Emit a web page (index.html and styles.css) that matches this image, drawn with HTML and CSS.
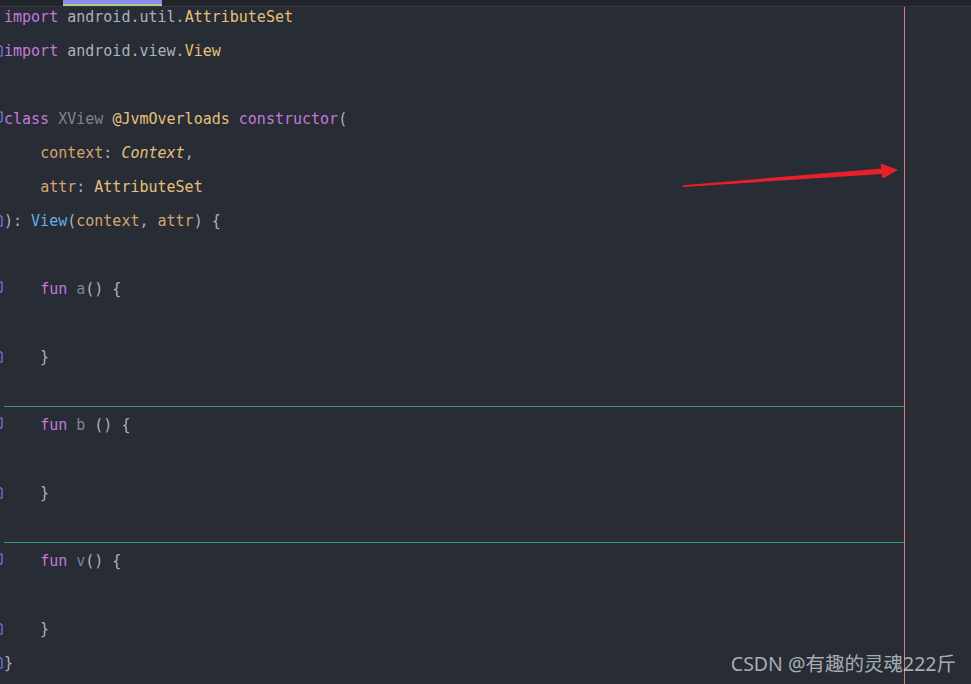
FILE: index.html
```html
<!DOCTYPE html>
<html lang="en">
<head>
    <meta charset="UTF-8">
    <title>XView.kt</title>
    <link rel="stylesheet" href="styles.css">
</head>
<body>

    <div class="tabbar">
        <div class="tab"></div>
    </div>

    <div class="editor">
        <div class="code">
            <div class="line"><span class="gutter"></span><span class="kw">import</span> android.util.<span class="ty">AttributeSet</span></div>
            <div class="line"><span class="gutter"><svg width="12" height="14" viewBox="0 0 12 14"><path d="M1 13 V4 L5 1 L9 4 V13 Z" fill="none" stroke="#7b7ef2" stroke-width="1.2"/></svg></span><span class="kw">import</span> android.view.<span class="ty">View</span></div>
            <div class="line"><span class="gutter"></span></div>
            <div class="line"><span class="gutter"><svg width="12" height="14" viewBox="0 0 12 14"><path d="M1 1 V10 L5 13 L9 10 V1 Z" fill="none" stroke="#7b7ef2" stroke-width="1.2"/></svg></span><span class="kw">class</span> <span class="unused">XView</span> <span class="ty">@JvmOverloads</span> <span class="kw">constructor</span>(</div>
            <div class="line"><span class="gutter"></span>    <span class="param">context</span>: <span class="ty italic">Context</span>,</div>
            <div class="line"><span class="gutter"></span>    <span class="param">attr</span>: <span class="ty">AttributeSet</span></div>
            <div class="line"><span class="gutter"><svg width="12" height="14" viewBox="0 0 12 14"><path d="M1 13 V4 L5 1 L9 4 V13 Z" fill="none" stroke="#7b7ef2" stroke-width="1.2"/></svg></span>): <span class="fn">View</span>(<span class="param">context</span>, <span class="param">attr</span>) {</div>
            <div class="line"><span class="gutter"></span></div>
            <div class="line"><span class="gutter"><svg width="12" height="14" viewBox="0 0 12 14"><path d="M1 1 V10 L5 13 L9 10 V1 Z" fill="none" stroke="#7b7ef2" stroke-width="1.2"/></svg></span>    <span class="kw">fun</span> <span class="unused">a</span>() {</div>
            <div class="line"><span class="gutter"></span></div>
            <div class="line"><span class="gutter"><svg width="12" height="14" viewBox="0 0 12 14"><path d="M1 13 V4 L5 1 L9 4 V13 Z" fill="none" stroke="#7b7ef2" stroke-width="1.2"/></svg></span>    }</div>
            <div class="line"><span class="gutter"></span></div>
            <div class="line sep"><span class="gutter"><svg width="12" height="14" viewBox="0 0 12 14"><path d="M1 1 V10 L5 13 L9 10 V1 Z" fill="none" stroke="#7b7ef2" stroke-width="1.2"/></svg></span>    <span class="kw">fun</span> <span class="unused">b</span> () {</div>
            <div class="line"><span class="gutter"></span></div>
            <div class="line"><span class="gutter"><svg width="12" height="14" viewBox="0 0 12 14"><path d="M1 13 V4 L5 1 L9 4 V13 Z" fill="none" stroke="#7b7ef2" stroke-width="1.2"/></svg></span>    }</div>
            <div class="line"><span class="gutter"></span></div>
            <div class="line sep"><span class="gutter"><svg width="12" height="14" viewBox="0 0 12 14"><path d="M1 1 V10 L5 13 L9 10 V1 Z" fill="none" stroke="#7b7ef2" stroke-width="1.2"/></svg></span>    <span class="kw">fun</span> <span class="unused">v</span>() {</div>
            <div class="line"><span class="gutter"></span></div>
            <div class="line"><span class="gutter"><svg width="12" height="14" viewBox="0 0 12 14"><path d="M1 13 V4 L5 1 L9 4 V13 Z" fill="none" stroke="#7b7ef2" stroke-width="1.2"/></svg></span>    }</div>
            <div class="line"><span class="gutter"><svg width="12" height="14" viewBox="0 0 12 14"><path d="M1 13 V4 L5 1 L9 4 V13 Z" fill="none" stroke="#7b7ef2" stroke-width="1.2"/></svg></span>}</div>
        </div>
        <div class="rest"></div>
    </div>

    <!-- red annotation arrow pointing at the right margin guide -->
    <svg class="arrow" width="230" height="30" viewBox="0 0 230 30">
        <path d="M0 24.2 L199 7.6 L199.6 13 L0.3 26 Z" fill="#e8202a"/>
        <path d="M198 3 L214 9 L200 17 Z" fill="#e8202a" stroke="#e8202a" stroke-width="1" stroke-linejoin="round"/>
    </svg>

    <div class="watermark">CSDN @有趣的灵魂222斤</div>

</body>
</html>
```

FILE: styles.css
```css
html, body {
    margin: 0;
    padding: 0;
    height: 100%;
    overflow: hidden;
}
body {
    background-color: #282c34;
    font-family: "DejaVu Sans Mono", "Liberation Mono", monospace;
    color: #abb2bf;
    display: flex;
    flex-direction: column;
    position: relative;
}
.tabbar {
    height: 6px;
    background-color: #21252b;
    border-bottom: 1px solid #353a44;
    position: relative;
    z-index: 2;
    flex-shrink: 0;
}
.tab {
    margin-left: 63px;
    width: 99px;
    height: 4px;
    background-color: #8c8cf2;
    border-bottom: 2px solid #a6d07c;
}
.editor {
    display: flex;
    flex: 1;
}
.code {
    width: 904px;
    border-right: 1px solid #e2757d;
    margin-top: -9px;
}
.line {
    height: 34px;
    padding-top: 4px;
    line-height: 30px;
    font-size: 15px;
    white-space: pre;
    box-sizing: border-box;
}
.line.sep {
    border-top: 1px solid #2f9a63;
    margin-left: 4px;
    padding-top: 3px;
}
.line.sep .gutter {
    margin-left: -4px;
}
.gutter {
    display: inline-block;
    width: 4px;
    height: 30px;
    vertical-align: top;
    position: relative;
    overflow: visible;
}
.gutter svg {
    position: absolute;
    left: -7px;
    top: 7px;
}
.kw {
    color: #c678dd;
}
.ty {
    color: #e5c07b;
}
.italic {
    font-style: italic;
}
.unused {
    color: #7f848e;
}
.param {
    color: #d7a46c;
}
.fn {
    color: #61afef;
}
.rest {
    flex: 1;
}
.arrow {
    position: absolute;
    left: 683px;
    top: 161px;
}
.watermark {
    position: absolute;
    right: 15px;
    bottom: 7px;
    font-family: "Noto Sans", "Noto Sans CJK SC", sans-serif;
    font-size: 19.5px;
    color: rgba(220, 224, 230, 0.72);
}
```
